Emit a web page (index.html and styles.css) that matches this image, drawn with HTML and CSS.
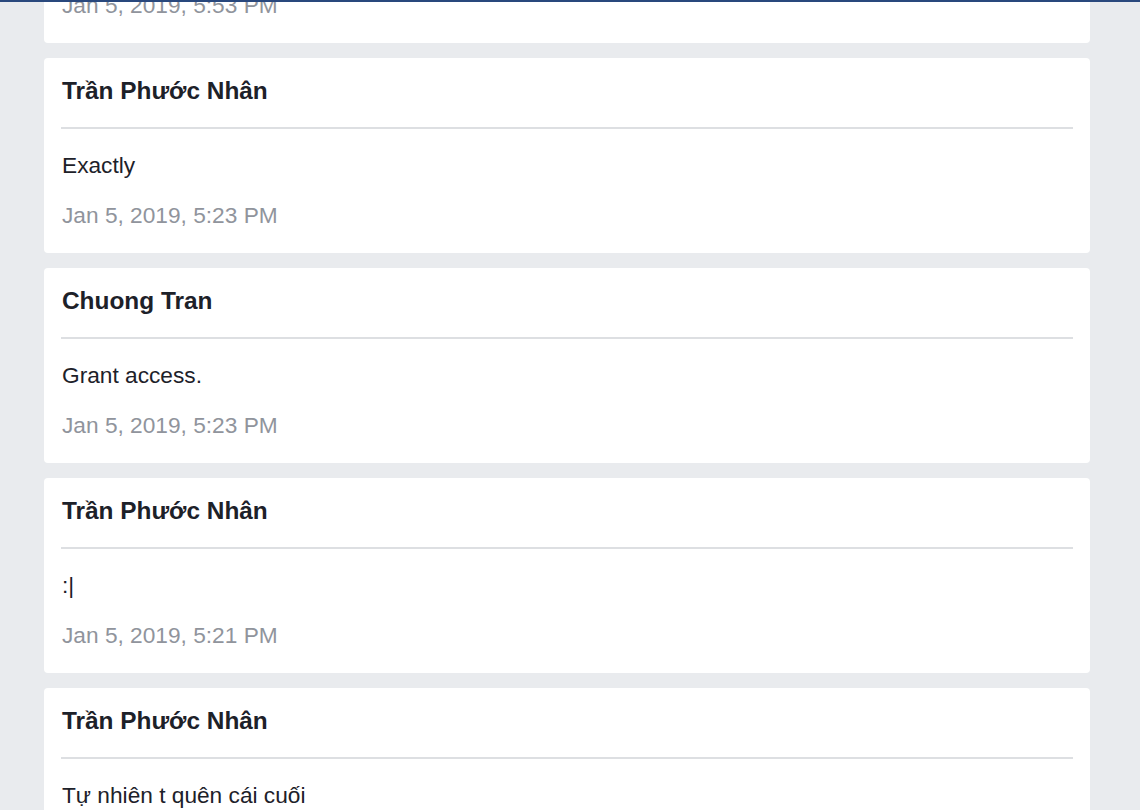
FILE: index.html
```html
<!DOCTYPE html>
<html lang="vi">
<head>
<meta charset="utf-8">
<title>Messages</title>
<link rel="stylesheet" href="styles.css">
</head>
<body>
<div class="topline"></div>
<main class="feed">
  <article class="card">
    <h2 class="name">Chuong Tran</h2>
    <div class="divider"></div>
    <p class="text">Ok</p>
    <p class="date">Jan 5, 2019, 5:53 PM</p>
  </article>
  <article class="card">
    <h2 class="name">Trần Phước Nhân</h2>
    <div class="divider"></div>
    <p class="text">Exactly</p>
    <p class="date">Jan 5, 2019, 5:23 PM</p>
  </article>
  <article class="card">
    <h2 class="name">Chuong Tran</h2>
    <div class="divider"></div>
    <p class="text">Grant access.</p>
    <p class="date">Jan 5, 2019, 5:23 PM</p>
  </article>
  <article class="card">
    <h2 class="name">Trần Phước Nhân</h2>
    <div class="divider"></div>
    <p class="text">:|</p>
    <p class="date">Jan 5, 2019, 5:21 PM</p>
  </article>
  <article class="card">
    <h2 class="name">Trần Phước Nhân</h2>
    <div class="divider"></div>
    <p class="text">Tự nhiên t quên cái cuối</p>
    <p class="date">Jan 5, 2019, 5:20 PM</p>
  </article>
</main>
</body>
</html>
```

FILE: styles.css
```css
html, body {
  margin: 0;
  padding: 0;
}
body {
  background: #e9ebee;
  font-family: "Liberation Sans", Arial, sans-serif;
  color: #1d2129;
  height: 810px;
  overflow: hidden;
}
.topline {
  position: fixed;
  top: 0;
  left: 0;
  right: 0;
  height: 2px;
  background: #29487d;
  z-index: 10;
}
.feed {
  display: flex;
  flex-direction: column;
  gap: 15px;
  width: 1046px;
  margin: -152px 0 0 44px;
}
.card {
  background: #fff;
  border-radius: 4px;
  padding: 19px 17px 25px 17px;
  height: 195px;
  box-sizing: border-box;
  flex: none;
}
.name {
  margin: 0 1px;
  font-size: 24.4px;
  line-height: 28px;
  font-weight: bold;
}
.divider {
  height: 2px;
  background: #dddfe2;
  margin: 22px 0 23px 0;
}
.text {
  margin: 0 1px;
  font-size: 22.7px;
  line-height: 26px;
}
.date {
  margin: 24px 1px 0 1px;
  font-size: 22.7px;
  line-height: 26px;
  color: #90949c;
}
```
